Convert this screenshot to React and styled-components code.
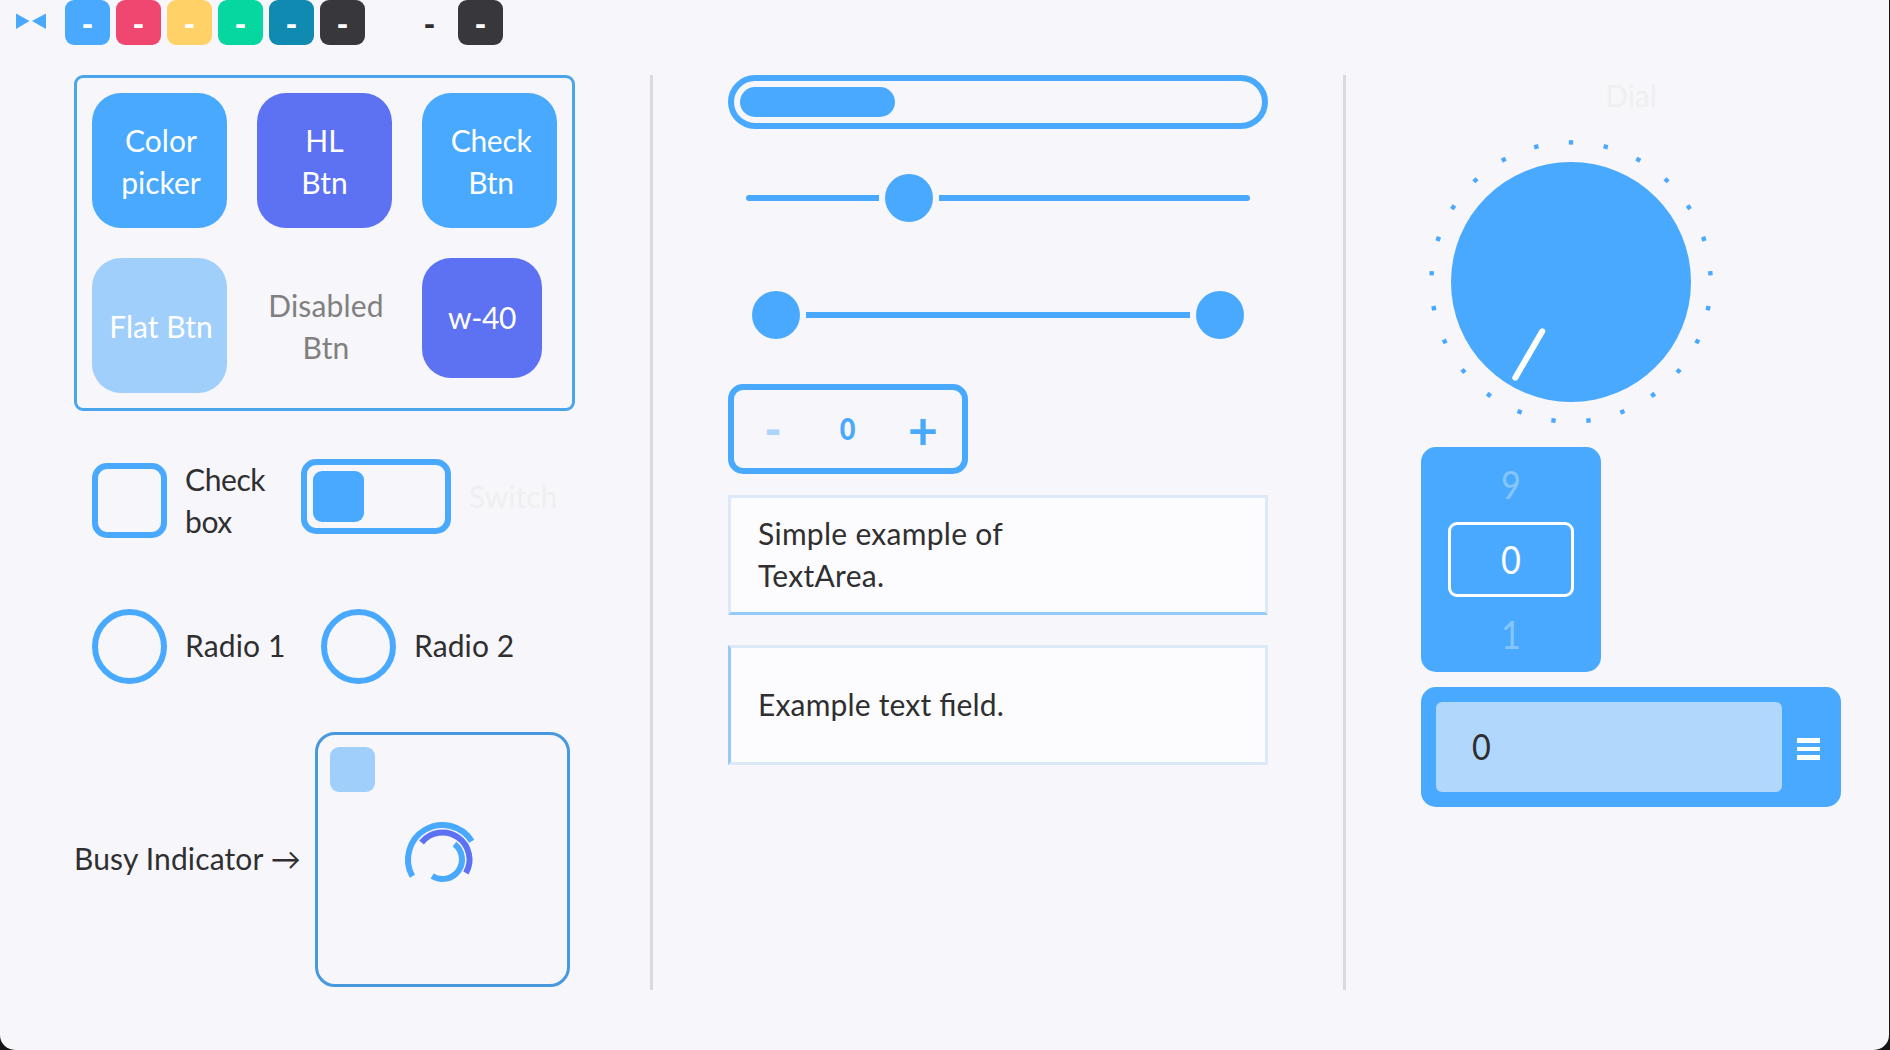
import React from "react";
import styled, { createGlobalStyle } from "styled-components";

const c = {
  bg: "#f7f6fa",
  blue: "#48a9ff",
  violet: "#5d72f3",
  flat: "#a1cffb",
  ink: "#2f2f32",
  faint: "#f0eff0",
};

const GlobalStyle = createGlobalStyle`
  *, *::before, *::after { box-sizing: border-box; }
  html, body { margin: 0; height: 1050px; background: #161616; overflow: hidden; }
  body {
    font-family: Lato, "Open Sans", sans-serif;
    font-size: 30px;
    line-height: 42px;
    font-feature-settings: "liga" 1;
    color: ${c.ink};
  }
`;

const Window = styled.div`
  width: 1889px;
  height: 1050px;
  background: ${c.bg};
  border-radius: 0 0 15px 15px;
`;

const Header = styled.header`
  display: flex;
  height: 75px;
  align-items: flex-start;
`;

const Logo = styled.svg`
  width: 30px;
  height: 16px;
  margin: 13px 19px 0 16px;
`;

const Swatch = styled.button`
  width: 45px;
  height: 45px;
  margin: 0 6px 0 ${(p) => p.$indent || 0}px;
  padding: 2px 0 0;
  border: 0;
  border-radius: 9px;
  background: ${(p) => p.$bg};
  color: ${(p) => p.$fg || "#fff"};
  font: 900 32px/41px Lato, sans-serif;
`;

const Main = styled.main`
  display: flex;
  padding-left: 74px;
`;

const Column = styled.section`
  width: ${(p) => p.$width}px;
  display: flex;
  flex-direction: column;
  align-items: flex-start;
`;

const Divider = styled.div`
  width: 3px;
  height: 915px;
  margin: 0 ${(p) => p.$right}px 0 ${(p) => p.$left}px;
  background: #dad9de;
`;

const ButtonGrid = styled.div`
  display: grid;
  grid-template-columns: repeat(3, 135px);
  grid-auto-rows: 135px;
  gap: 30px;
  width: 501px;
  height: 336px;
  padding: 15px;
  border: 3px solid #4ba5ec;
  border-radius: 9px;
`;

const Button = styled.button`
  width: ${(p) => p.$size || 135}px;
  height: ${(p) => p.$size || 135}px;
  padding: 0 0 ${(p) => p.$lift || 0}px ${(p) => p.$nudge ?? 3}px;
  border: 0;
  border-radius: 29px;
  background: ${(p) => p.$bg || "transparent"};
  color: ${(p) => p.$fg || "#fff"};
  font: inherit;
  letter-spacing: ${(p) => p.$track || 0}px;
  white-space: pre-line;
`;

const Row = styled.div`
  display: flex;
  align-items: center;
  margin: ${(p) => p.$top}px 0 0 ${(p) => p.$left || 0}px;
`;

const SwitchGroup = styled.div`
  display: flex;
  align-items: center;
  align-self: flex-start;
`;

const CheckMark = styled.span`
  width: 75px;
  height: 75px;
  flex: none;
  border: 6px solid ${c.blue};
  border-radius: ${(p) => (p.$round ? "50%" : "15px")};
`;

const Label = styled.span`
  width: ${(p) => (p.$width ? p.$width + "px" : "auto")};
  margin: -${(p) => p.$lift ?? 3}px 0 0 ${(p) => p.$gap ?? 18}px;
  letter-spacing: ${(p) => p.$track || 0}px;
  color: ${(p) => p.$fg || c.ink};
  white-space: pre;
`;

const SwitchTrack = styled.span`
  width: 150px;
  height: 75px;
  padding: 6px;
  border: 6px solid ${c.blue};
  border-radius: 15px;
`;

const SwitchKnob = styled.span`
  display: block;
  width: 51px;
  height: 51px;
  border-radius: 9px;
  background: ${c.blue};
`;

const BusyPanel = styled.div`
  position: relative;
  width: 255px;
  height: 255px;
  padding: 12px;
  border: 3px solid #4898dd;
  border-radius: 20px;
`;

const BusyChip = styled.div`
  width: 45px;
  height: 45px;
  border-radius: 9px;
  background: ${c.flat};
`;

const Spinner = styled.svg`
  position: absolute;
  left: 84px;
  top: 84px;
  width: 81px;
  height: 81px;
  fill: none;
  stroke: ${c.blue};
  stroke-width: 6;
`;

const Progress = styled.div`
  width: 540px;
  height: 54px;
  padding: 6px;
  border: 6px solid ${c.blue};
  border-radius: 27px;
`;

const ProgressFill = styled.div`
  width: 155px;
  height: 30px;
  border-radius: 15px;
  background: ${c.blue};
`;

const Slider = styled.div`
  display: flex;
  align-items: center;
  gap: 6px;
  height: 48px;
  margin: ${(p) => p.$top}px 0 0 ${(p) => p.$left}px;
`;

const Track = styled.span`
  width: ${(p) => p.$width}px;
  height: 6px;
  background: ${c.blue};
  border-radius: ${(p) => p.$radius || 0};
`;

const Handle = styled.span`
  width: 48px;
  height: 48px;
  border-radius: 50%;
  background: ${c.blue};
`;

const SpinBox = styled.div`
  display: grid;
  grid-template-columns: 78px 72px 78px;
  align-items: center;
  width: 240px;
  height: 90px;
  margin-top: 45px;
  border: 6px solid ${c.blue};
  border-radius: 15px;
  color: ${c.blue};
  font-weight: 700;
  text-align: center;
`;

const SpinStep = styled.span`
  font-size: ${(p) => (p.$off ? 47 : 52)}px;
  font-weight: ${(p) => (p.$off ? 900 : 700)};
  opacity: ${(p) => (p.$off ? 0.42 : 1)};
`;

const SpinValue = styled.span`
  font-size: 30px;
  font-weight: 900;
  padding-bottom: 2px;
`;

const Field = styled.div`
  display: flex;
  align-items: center;
  width: 540px;
  height: 120px;
  margin-top: ${(p) => p.$top}px;
  padding: 0 27px 3px;
  border: 3px solid #dbe9f9;
  ${(p) => p.$accent}: 3px solid #93caf8;
  background: #fcfbfd;
  letter-spacing: ${(p) => p.$track}px;
  white-space: pre-line;
`;

const DialLabel = styled.div`
  width: 420px;
  height: 42px;
  line-height: 40px;
  text-align: center;
  color: ${c.faint};
`;

const DialFace = styled.svg`
  width: 300px;
  height: 300px;
  margin-top: 15px;
`;

const Tumbler = styled.div`
  display: grid;
  grid-template-rows: repeat(3, 75px);
  justify-content: center;
  width: 180px;
  height: 225px;
  margin-top: 15px;
  border-radius: 15px;
  background: ${c.blue};
  color: #fff;
`;

const TumblerItem = styled.div`
  display: flex;
  align-items: center;
  justify-content: center;
  width: 126px;
  padding-bottom: 2px;
  border: 3px solid ${(p) => (p.$current ? "#fff" : "transparent")};
  border-radius: 9px;
  font-size: 38px;
  color: ${(p) => (p.$current ? "#fff" : "rgba(255,255,255,.36)")};
`;

const Digit = styled.span`
  display: inline-block;
  transform: scaleX(0.9);
`;

const Combo = styled.div`
  display: flex;
  align-items: center;
  width: 420px;
  height: 120px;
  margin-top: 15px;
  padding: 15px;
  border-radius: 15px;
  background: ${c.blue};
`;

const ComboValue = styled.div`
  display: flex;
  align-items: center;
  width: 346px;
  height: 90px;
  padding: 0 0 2px 35px;
  border-radius: 6px;
  background: #b1d7fc;
  font-size: 36px;
`;

const Menu = styled.div`
  display: grid;
  gap: 4px;
  margin: 4px 0 0 15px;
  i { width: 23px; height: 4.7px; background: #fff; }
`;

const swatches = [
  { bg: c.blue },
  { bg: "#ef476f" },
  { bg: "#ffd166" },
  { bg: "#06d6a0" },
  { bg: "#118ab2" },
  { bg: "#38373b" },
  { bg: "transparent", fg: "#2f2f32", indent: 36 },
  { bg: "#38373b" },
];

const buttons = [
  { text: "Color\npicker", bg: c.blue },
  { text: "HL\nBtn", bg: c.violet, nudge: 0 },
  { text: "Check\nBtn", bg: c.blue, track: -0.3 },
  { text: "Flat Btn", bg: c.flat },
  { text: "Disabled\nBtn", fg: "#808080", track: 0.15 },
  { text: "w-40", bg: c.violet, size: 120, nudge: 0, lift: 2, track: -0.4 },
];

const arc = (r, from, to) => {
  const at = (deg) => {
    const a = (deg * Math.PI) / 180;
    return `${40.5 + r * Math.cos(a)} ${40.5 + r * Math.sin(a)}`;
  };
  return `M${at(from)}A${r} ${r} 0 ${to - from > 180 ? 1 : 0} 1 ${at(to)}`;
};

export default function App() {
  return (
    <>
      <GlobalStyle />
      <Window>
        <Header>
          <Logo viewBox="0 0 30 16" fill={c.blue}>
            <path d="M0 .5 13.5 8 0 16zM30 .5 16 8 30 16z" />
          </Logo>
          {swatches.map((s, i) => (
            <Swatch key={i} $bg={s.bg} $fg={s.fg} $indent={s.indent}>-</Swatch>
          ))}
        </Header>
        <Main>
          <Column $width={501}>
            <ButtonGrid>
              {buttons.map((b) => (
                <Button key={b.text} $bg={b.bg} $fg={b.fg} $size={b.size} $nudge={b.nudge} $lift={b.lift} $track={b.track}>
                  {b.text}
                </Button>
              ))}
            </ButtonGrid>
            <Row $top={48} $left={18}>
              <CheckMark />
              <Label $width={116} $lift={1} $track={-0.4}>{"Check\nbox"}</Label>
              <SwitchGroup>
                <SwitchTrack><SwitchKnob /></SwitchTrack>
                <Label $lift={2} $fg={c.faint}>Switch</Label>
              </SwitchGroup>
            </Row>
            <Row $top={67} $left={18}>
              <CheckMark $round />
              <Label $width={136} $track={0.15}>Radio 1</Label>
              <CheckMark $round />
              <Label $track={0.1}>Radio 2</Label>
            </Row>
            <Row $top={48}>
              <Label $width={241} $gap={0} $track={0.15}>Busy Indicator →</Label>
              <BusyPanel>
                <BusyChip />
                <Spinner viewBox="0 0 81 81">
                  <path d={arc(34.5, 151, 328)} />
                  <path d={arc(27, 219, 390)} stroke={c.violet} />
                  <path d={arc(19.5, -52, 122)} />
                </Spinner>
              </BusyPanel>
            </Row>
          </Column>
          <Divider $left={75} $right={75} />
          <Column $width={540}>
            <Progress><ProgressFill /></Progress>
            <Slider $top={45} $left={18}>
              <Track $width={133} $radius="3px 0 0 3px" />
              <Handle />
              <Track $width={311} $radius="0 3px 3px 0" />
            </Slider>
            <Slider $top={69} $left={24}>
              <Handle />
              <Track $width={384} />
              <Handle />
            </Slider>
            <SpinBox>
              <SpinStep $off>-</SpinStep>
              <SpinValue><Digit>0</Digit></SpinValue>
              <SpinStep>+</SpinStep>
            </SpinBox>
            <Field $top={21} $accent="border-bottom" $track={0.28}>{"Simple example of\nTextArea."}</Field>
            <Field $top={30} $accent="border-left" $track={0.17}>Example text field.</Field>
          </Column>
          <Divider $left={75} $right={75} />
          <Column $width={420}>
            <DialLabel>Dial</DialLabel>
            <DialFace viewBox="-150 -150 300 300" fill={c.blue}>
              <circle r="120" />
              {Array.from({ length: 25 }, (_, i) => (
                <rect key={i} x="-2.2" y="-141.8" width="4.4" height="4.4" transform={`rotate(${i * 14.4})`} />
              ))}
              <path d="M-28.7 49.3-55.7 95.7" stroke="#fff" strokeWidth="6" strokeLinecap="round" />
            </DialFace>
            <Tumbler>
              <TumblerItem><Digit>9</Digit></TumblerItem>
              <TumblerItem $current><Digit>0</Digit></TumblerItem>
              <TumblerItem><Digit>1</Digit></TumblerItem>
            </Tumbler>
            <Combo>
              <ComboValue><Digit>0</Digit></ComboValue>
              <Menu><i /><i /><i /></Menu>
            </Combo>
          </Column>
        </Main>
      </Window>
    </>
  );
}
